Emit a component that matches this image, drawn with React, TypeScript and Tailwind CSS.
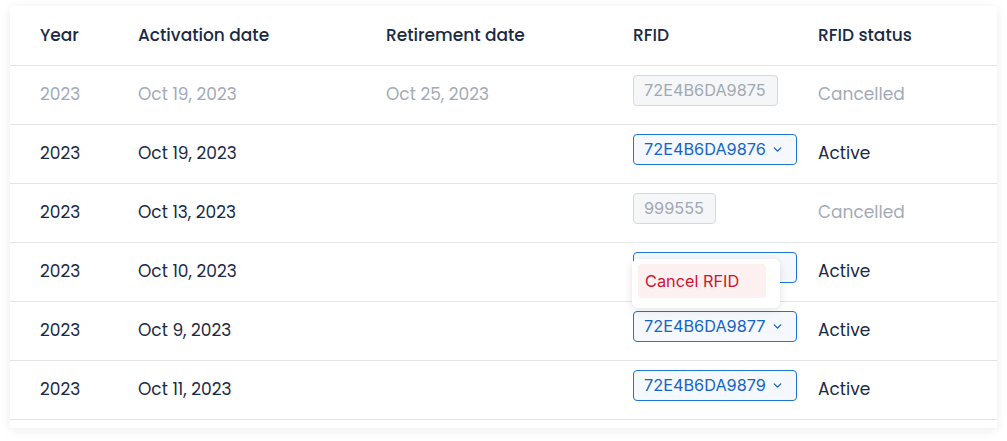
import { ChevronDown } from "lucide-react";

type Row = {
  year: string;
  activated: string;
  retired?: string;
  rfid: string;
  status: "Active" | "Cancelled";
  open?: boolean;
};

const rows: Row[] = [
  { year: "2023", activated: "Oct 19, 2023", retired: "Oct 25, 2023", rfid: "72E4B6DA9875", status: "Cancelled" },
  { year: "2023", activated: "Oct 19, 2023", rfid: "72E4B6DA9876", status: "Active" },
  { year: "2023", activated: "Oct 13, 2023", rfid: "999555", status: "Cancelled" },
  { year: "2023", activated: "Oct 10, 2023", rfid: "72E4B6DA9878", status: "Active", open: true },
  { year: "2023", activated: "Oct 9, 2023", rfid: "72E4B6DA9877", status: "Active" },
  { year: "2023", activated: "Oct 11, 2023", rfid: "72E4B6DA9879", status: "Active" },
];

const cell = "px-0 text-left";
const dark = "text-[#1b2a47]";
const muted = "text-[#a3abb8]";

function RfidChip({ row }: { row: Row }) {
  if (row.status === "Cancelled") {
    return (
      <span className="mb-[8px] flex h-[31px] w-fit items-center rounded-[4px] border border-[#d5d9de] bg-[#f4f6f8] pl-[10px] pr-[11px] text-[16.3px] text-[#a3a9b2] [font-family:Inter,sans-serif]">
        {row.rfid}
      </span>
    );
  }
  return (
    <div className="relative mb-[8px] w-fit">
      <button className="flex h-[31px] w-[164px] items-center gap-[5px] rounded-[4px] border border-[#1f74d8] bg-[#f5f8fc] px-[10px] text-[16.3px] text-[#1565c8] [font-family:Inter,sans-serif]">
        {!row.open && (
          <>
            {row.rfid}
            <ChevronDown className="h-[13px] w-[13px]" strokeWidth={2.5} />
          </>
        )}
      </button>
      {row.open && (
        <div className="absolute left-[-1px] top-[7px] z-10 w-[148px] rounded-[6px] bg-white pb-[10px] pl-[6px] pt-[5px] shadow-[0_2px_8px_rgba(0,0,0,0.12)]">
          <div className="flex h-[34px] w-[128px] items-center rounded-[4px] bg-[#fdf0f1] px-[7px] text-[16.3px] text-[#d3122e] [font-family:Inter,sans-serif]">
            Cancel RFID
          </div>
        </div>
      )}
    </div>
  );
}

export default function App() {
  return (
    <div className="h-[441px] w-[1007px] bg-white pl-[10px] pr-[10px] pt-[6px] [font-family:Poppins,'Open_Sans',sans-serif]">
      <div className="bg-white pb-[8px] shadow-[0_2px_10px_rgba(0,0,0,0.08)]">
        <table className="w-full border-collapse text-[17px]">
          <thead>
            <tr className={`h-[59px] border-b border-[#e2e4e8] ${dark}`}>
              <th className={`${cell} w-[128px] pl-[30px] font-medium`}>Year</th>
              <th className={`${cell} w-[248px] font-medium`}>Activation date</th>
              <th className={`${cell} w-[247px] font-medium`}>Retirement date</th>
              <th className={`${cell} w-[185px] font-medium`}>RFID</th>
              <th className={`${cell} font-medium`}>RFID status</th>
            </tr>
          </thead>
          <tbody>
            {rows.map((r, i) => {
              const tone = r.retired ? muted : dark;
              const statusTone = r.status === "Cancelled" ? muted : dark;
              return (
                <tr key={i} className={`h-[59px] border-b border-[#e2e4e8] ${tone}`}>
                  <td className={`${cell} pl-[30px]`}>{r.year}</td>
                  <td className={cell}>{r.activated}</td>
                  <td className={cell}>{r.retired ?? ""}</td>
                  <td className={cell}>
                    <RfidChip row={r} />
                  </td>
                  <td className={`${cell} ${statusTone}`}>{r.status}</td>
                </tr>
              );
            })}
          </tbody>
        </table>
      </div>
    </div>
  );
}
